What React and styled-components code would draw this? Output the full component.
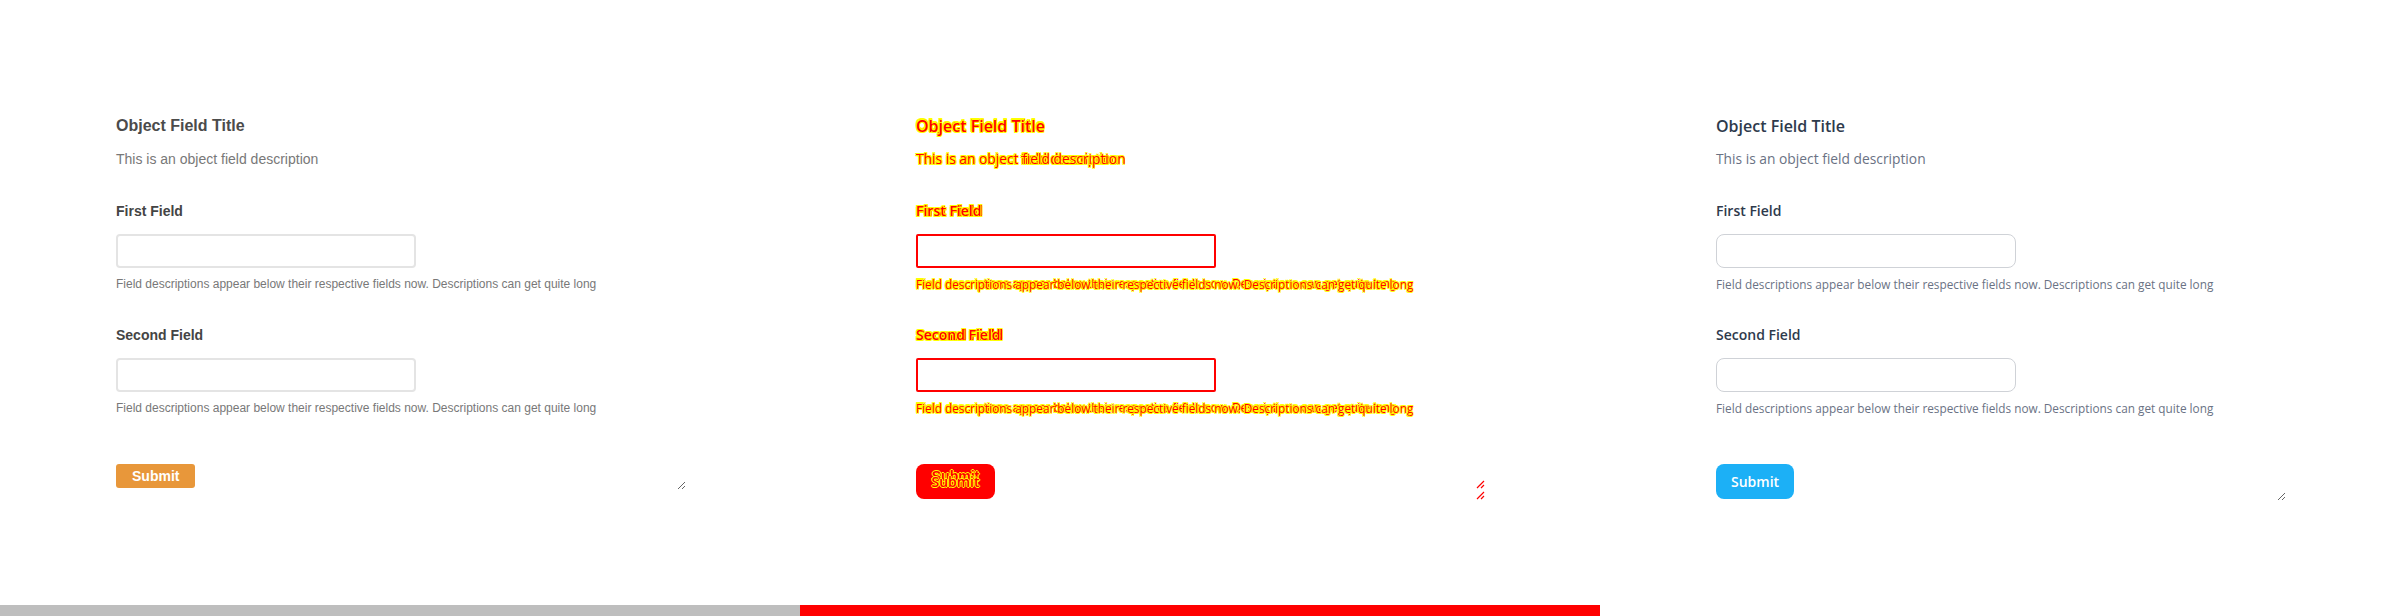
import React from 'react';
import styled, { createGlobalStyle, css } from 'styled-components';

const GlobalStyle = createGlobalStyle`
  html, body { margin: 0; padding: 0; background: #ffffff; }
  body { width: 2400px; height: 616px; overflow: hidden; }
  * { box-sizing: border-box; }
`;

const FONTS = {
  classic: '"Liberation Sans", Arial, Helvetica, sans-serif',
  modern: '"Open Sans", "Noto Sans", sans-serif',
};

const COLORS = {
  classic: { title: '#4b4b4b', label: '#444444', muted: '#787878' },
  modern: { title: '#2e3a4c', label: '#2e3a4c', muted: '#6a7284' },
};

/* diff rendering: red fill with a thin yellow outline */
const diffInk = css`
  color: #ff0000;
  text-shadow: 0.7px 0.7px 0 #ffff00, -0.7px -0.7px 0 #ffff00,
    0.7px -0.7px 0 #ffff00, -0.7px 0.7px 0 #ffff00;
`;

const ink = (role) => (p) =>
  p.$diff ? diffInk : css`color: ${COLORS[p.$v][role]};`;

const Page = styled.div`
  width: 2400px;
  height: 616px;
  display: flex;
  flex-direction: column;
`;

const Panels = styled.div`
  display: flex;
  height: 605px;
`;

const Column = styled.section`
  flex: 0 0 800px;
  padding: 100px 0 0 100px;
`;

const Frame = styled.form`
  position: relative;
  width: 586px;
  padding: 16px 16px 2px;
  display: flex;
  flex-direction: column;
  ${(p) => p.$resizable && css`
    resize: both;
    overflow: auto;
  `}
`;

const Header = styled.div`
  display: flex;
  flex-direction: column;
  gap: 13px;
`;

const Fields = styled.div`
  display: flex;
  flex-direction: column;
  gap: 33px;
  margin-top: 32px;
`;

const FieldGroup = styled.div`
  display: flex;
  flex-direction: column;
`;

const InputRow = styled.div`
  margin-top: 13px;
`;

const HelpRow = styled.div`
  margin-top: 8px;
`;

const Actions = styled.div`
  margin-top: 48px;
  display: flex;
`;

const Overlay = styled.div`
  display: grid;
  & > * { grid-area: 1 / 1; }
`;

const Title = styled.div`
  font-family: ${(p) => FONTS[p.$v]};
  font-size: 16px;
  line-height: 20px;
  font-weight: ${(p) => (p.$v === 'classic' ? 700 : 600)};
  white-space: nowrap;
  ${ink('title')}
`;

const Description = styled.div`
  font-family: ${(p) => FONTS[p.$v]};
  font-size: ${(p) => (p.$v === 'classic' ? '14px' : '13.8px')};
  line-height: 20px;
  white-space: nowrap;
  ${ink('muted')}
`;

const Label = styled.label`
  display: block;
  font-family: ${(p) => FONTS[p.$v]};
  font-size: 14px;
  line-height: 20px;
  font-weight: ${(p) => (p.$v === 'classic' ? 700 : 600)};
  white-space: nowrap;
  ${ink('label')}
`;

const Help = styled.div`
  font-family: ${(p) => FONTS[p.$v]};
  font-size: ${(p) => (p.$v === 'classic' ? '12px' : '11.8px')};
  line-height: 16px;
  white-space: nowrap;
  ${ink('muted')}
`;

const inputLooks = {
  classic: css`
    border: 2px solid #e4e4e4;
    border-radius: 4px;
  `,
  modern: css`
    border: 1px solid #cfd2d7;
    border-radius: 8px;
  `,
  diff: css`
    border: 2px solid #ff0000;
    border-radius: 2px;
  `,
};

const TextInput = styled.input`
  display: block;
  width: 300px;
  height: 34px;
  padding: 0 10px;
  margin: 0;
  background: #ffffff;
  outline: none;
  font-family: ${FONTS.classic};
  font-size: 14px;
  ${(p) => inputLooks[p.$look]}
`;

const buttonLooks = {
  classic: css`
    height: 24px;
    padding: 0 16px;
    border-radius: 3px;
    background: #e8973a;
    color: #ffffff;
    font-family: ${FONTS.classic};
    font-weight: 700;
  `,
  modern: css`
    height: 35px;
    padding: 0 15px;
    border-radius: 8px;
    background: #1cb0f6;
    color: #ffffff;
    font-family: ${FONTS.modern};
    font-weight: 600;
  `,
  diff: css`
    width: 79px;
    height: 35px;
    padding: 0;
    border-radius: 8px;
    background: #ff0000;
    display: grid;
    & > * { grid-area: 1 / 1; }
  `,
};

const Button = styled.button`
  border: none;
  margin: 0;
  font-size: 14px;
  line-height: 1;
  cursor: pointer;
  ${(p) => buttonLooks[p.$look]}
`;

const ButtonInk = styled.span`
  display: block;
  font-family: ${(p) => FONTS[p.$v]};
  font-weight: ${(p) => (p.$v === 'classic' ? 700 : 600)};
  font-size: 14px;
  height: ${(p) => (p.$v === 'classic' ? '24px' : '35px')};
  line-height: ${(p) => (p.$v === 'classic' ? '24px' : '35px')};
  text-align: center;
  align-self: start;
  color: #ff0000;
  text-shadow: 1px 0 #ffff00, -1px 0 #ffff00, 0 1px #ffff00, 0 -1px #ffff00;
`;

const Grip = styled.svg`
  position: absolute;
  right: 1px;
  bottom: ${(p) => p.$bottom}px;
  width: 10px;
  height: 10px;
`;

const BarRow = styled.div`
  display: flex;
  height: 11px;
`;

const BarSegment = styled.div`
  flex: 0 0 800px;
  background: ${(p) => p.$tone};
`;

function Text({ as: C, variant, children }) {
  if (variant === 'diff') {
    return (
      <Overlay>
        <C $v="classic" $diff>{children}</C>
        <C $v="modern" $diff>{children}</C>
      </Overlay>
    );
  }
  return <C $v={variant}>{children}</C>;
}

function ResizeGrip({ bottom }) {
  return (
    <Grip $bottom={bottom} viewBox="0 0 10 10">
      <path d="M9 2 L2 9 M9 6 L6 9" stroke="#ff0000" strokeWidth="1.2" fill="none" />
    </Grip>
  );
}

const FIELDS = [
  { id: 'first', label: 'First Field' },
  { id: 'second', label: 'Second Field' },
];

const HELP =
  'Field descriptions appear below their respective fields now. Descriptions can get quite long';

function ObjectForm({ variant }) {
  const isDiff = variant === 'diff';
  return (
    <Frame $resizable={!isDiff} onSubmit={(e) => e.preventDefault()}>
      <Header>
        <Text as={Title} variant={variant}>Object Field Title</Text>
        <Text as={Description} variant={variant}>This is an object field description</Text>
      </Header>
      <Fields>
        {FIELDS.map((f) => (
          <FieldGroup key={f.id}>
            <Text as={Label} variant={variant}>{f.label}</Text>
            <InputRow>
              <TextInput $look={variant} type="text" aria-label={f.label} />
            </InputRow>
            <HelpRow>
              <Text as={Help} variant={variant}>{HELP}</Text>
            </HelpRow>
          </FieldGroup>
        ))}
      </Fields>
      <Actions>
        {isDiff ? (
          <Button $look="diff" type="submit">
            <ButtonInk $v="classic">Submit</ButtonInk>
            <ButtonInk $v="modern">Submit</ButtonInk>
          </Button>
        ) : (
          <Button $look={variant} type="submit">Submit</Button>
        )}
      </Actions>
      {isDiff && (
        <>
          <ResizeGrip bottom={12} />
          <ResizeGrip bottom={1} />
        </>
      )}
    </Frame>
  );
}

export default function App() {
  return (
    <Page>
      <GlobalStyle />
      <Panels>
        <Column>
          <ObjectForm variant="classic" />
        </Column>
        <Column>
          <ObjectForm variant="diff" />
        </Column>
        <Column>
          <ObjectForm variant="modern" />
        </Column>
      </Panels>
      <BarRow>
        <BarSegment $tone="#bebebe" />
        <BarSegment $tone="#ff0000" />
        <BarSegment $tone="transparent" />
      </BarRow>
    </Page>
  );
}
